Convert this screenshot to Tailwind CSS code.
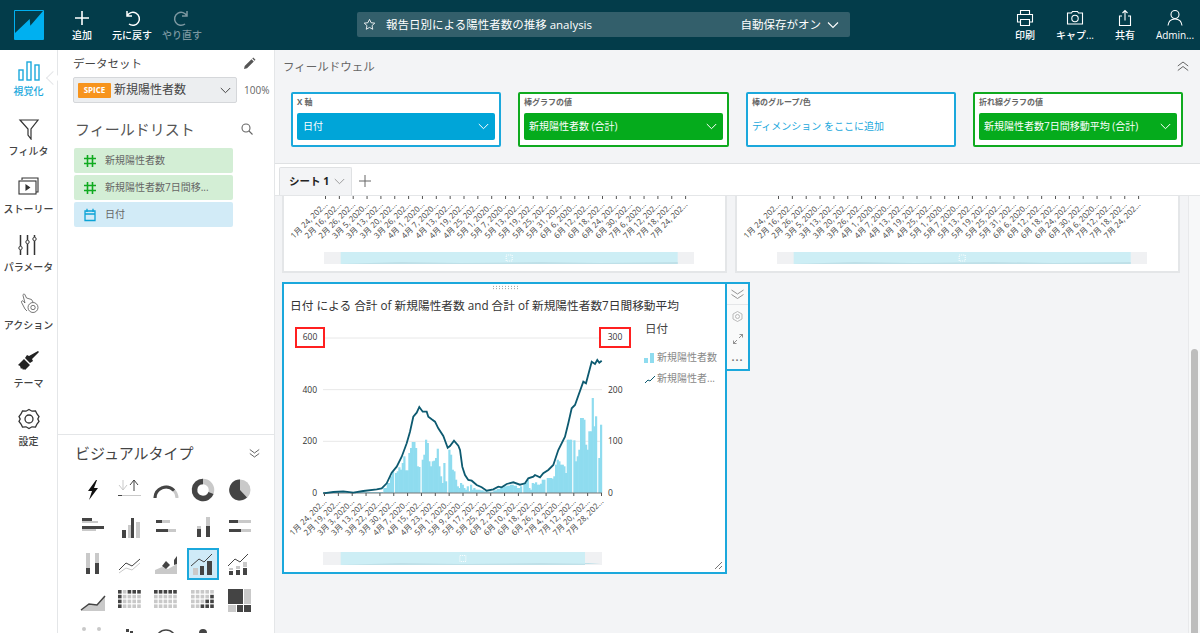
<!DOCTYPE html>
<html lang="ja">
<head>
<meta charset="UTF-8" />
<title>QuickSight</title>
<script src="https://cdn.jsdelivr.net/npm/@tailwindcss/browser@4"></script>
</head>
<body class="h-[633px] w-[1200px] overflow-hidden bg-white text-[#444] font-['Open_Sans','Noto_Sans_CJK_JP',sans-serif]">
<!-- top bar -->
<header class="flex h-[50px] bg-[#033c4a] text-white">
  <div class="flex w-[57px] shrink-0 items-center justify-center">
    <svg width="30" height="30" viewBox="0 0 30 30"><rect width="30" height="30" rx="1" fill="#00b0f0"/><path d="M1 1h28L16.300 15.700 15.700 9 1 23z" fill="#033c4a"/></svg>
  </div>
  <div class="flex w-[50px] flex-col items-center pt-[9px] text-[10px] leading-[14px]">
    <svg width="18" height="18" viewBox="0 0 18 18" fill="none" stroke="#fff" stroke-width="1.6"><path d="M9 2v14M2 9h14"/></svg>
    <span class="mt-[1px] font-medium">追加</span>
  </div>
  <div class="flex w-[50px] flex-col items-center pt-[9px] text-[10px] leading-[14px]">
    <svg width="18" height="18" viewBox="0 0 18 18" fill="none" stroke="#fff" stroke-width="1.5"><path d="M4 2v5h5M4 7a6.500 6.500 0 1 1 2 8"/></svg>
    <span class="mt-[1px] whitespace-nowrap font-medium">元に戻す</span>
  </div>
  <div class="flex w-[50px] flex-col items-center pt-[9px] text-[10px] leading-[14px] text-[#7d98a1]">
    <svg width="18" height="18" viewBox="0 0 18 18" fill="none" stroke="#7d98a1" stroke-width="1.5"><path d="M14 2v5H9M14 7a6.500 6.500 0 1 0-2 8"/></svg>
    <span class="mt-[1px] whitespace-nowrap font-medium">やり直す</span>
  </div>
  <div class="ml-[150px] mt-[12px] flex h-[25px] w-[493px] items-center rounded-[2px] bg-[#335f6b] pl-[6px] pr-[11px] text-[11.5px]">
    <svg width="13" height="13" viewBox="0 0 24 24" fill="none" stroke="#fff" stroke-width="1.6"><path d="M12 2.500l2.900 6.200 6.800.8-5 4.600 1.300 6.700-6-3.400-6 3.400 1.300-6.700-5-4.600 6.800-.8z"/></svg>
    <span class="ml-[10px]">報告日別による陽性者数の推移 analysis</span>
    <span class="ml-auto">自動保存がオン</span>
    <svg class="ml-[6px]" width="12" height="8" viewBox="0 0 12 8" fill="none" stroke="#fff" stroke-width="1.1"><path d="M1 1.500l5 5 5-5"/></svg>
  </div>
  <div class="ml-auto flex text-[10px] leading-[14px]">
    <div class="flex w-[50px] flex-col items-center pt-[9px]">
      <svg width="18" height="18" viewBox="0 0 18 18" fill="none" stroke="#fff" stroke-width="1.1"><path d="M4.500 5V1.500h9V5M4.500 13H1.500V5.500h15V13h-3M4.500 10.500h9v6h-9z"/></svg>
      <span class="mt-[1px] font-medium">印刷</span>
    </div>
    <div class="flex w-[50px] flex-col items-center pt-[9px]">
      <svg width="18" height="18" viewBox="0 0 18 18" fill="none" stroke="#fff" stroke-width="1.1"><path d="M1.500 4h4l1-1.500h5L12.500 4h4v11h-15z"/><circle cx="9" cy="9.500" r="3.200"/></svg>
      <span class="mt-[1px] whitespace-nowrap font-medium">キャプ...</span>
    </div>
    <div class="flex w-[50px] flex-col items-center pt-[9px]">
      <svg width="18" height="18" viewBox="0 0 18 18" fill="none" stroke="#fff" stroke-width="1.1"><path d="M6 7H3.500v9.500h11V7H12M9 11.500V1.500M6.500 4L9 1.500 11.500 4"/></svg>
      <span class="mt-[1px] font-medium">共有</span>
    </div>
    <div class="flex w-[50px] flex-col items-center pt-[9px]">
      <svg width="18" height="18" viewBox="0 0 18 18" fill="none" stroke="#fff" stroke-width="1.1"><circle cx="9" cy="5.500" r="4"/><path d="M2 16.500c.5-4.500 3-6.500 7-6.500s6.500 2 7 6.500"/></svg>
      <span class="mt-[1px] whitespace-nowrap font-medium">Admin...</span>
    </div>
  </div>
</header>

<div class="flex h-[583px]">
  <!-- left nav -->
  <nav class="relative flex w-[58px] shrink-0 flex-col items-center border-r border-[#e4e6e8] pt-[10px] text-[10px] leading-[14px]">
    <div class="flex h-[58px] flex-col items-center text-[#1ba8dc]">
      <svg width="22" height="21" viewBox="0 0 22 21" fill="none" stroke="#1ba8dc" stroke-width="1.4"><rect x="1" y="10" width="4" height="10"/><rect x="9" y="2" width="4" height="18"/><rect x="17" y="5" width="4" height="15"/></svg>
      <span class="mt-[3px] font-medium">視覚化</span>
    </div>
    <div class="flex h-[58px] flex-col items-center">
      <svg width="22" height="22" viewBox="0 0 22 22" fill="none" stroke="#333" stroke-width="1.2"><path d="M2 2h18l-7 9v10l-3-4v-6z"/></svg>
      <span class="mt-[4px] font-medium">フィルタ</span>
    </div>
    <div class="flex h-[58px] flex-col items-center">
      <svg width="22" height="22" viewBox="0 0 22 22" fill="none" stroke="#333" stroke-width="1.1"><path d="M4 4V2h16v14h-2"/><rect x="1" y="5" width="17" height="13"/><path d="M8 9v5l3.500-2.500z" fill="#333"/></svg>
      <span class="mt-[4px] whitespace-nowrap font-medium">ストーリー</span>
    </div>
    <div class="flex h-[58px] flex-col items-center">
      <svg width="22" height="22" viewBox="0 0 22 22" fill="none" stroke="#333" stroke-width="1.5"><path d="M3.500 1v11M3.500 16v5M10.500 1v5M10.500 10v11M17.500 1v2M17.500 7v14"/><circle cx="3.500" cy="14" r="1.700" stroke-width="1"/><circle cx="10.500" cy="8" r="1.700" stroke-width="1"/><circle cx="17.500" cy="5" r="1.700" stroke-width="1"/></svg>
      <span class="mt-[4px] whitespace-nowrap font-medium">パラメータ</span>
    </div>
    <div class="flex h-[58px] flex-col items-center">
      <svg width="22" height="22" viewBox="0 0 22 22" fill="none" stroke="#555" stroke-width="0.8"><path d="M7 11L5 3.500a1 1 0 0 1 2-.7L8.500 6l5 1.500 1.500 2.500M7 11L5.500 9.500a1 1 0 0 0-2 .8L7 17l2 2"/><circle cx="15" cy="15.500" r="5"/><circle cx="15" cy="15.500" r="2.200"/></svg>
      <span class="mt-[4px] whitespace-nowrap font-medium">アクション</span>
    </div>
    <div class="flex h-[58px] flex-col items-center">
      <svg width="22" height="22" viewBox="0 0 22 22" fill="#222"><path d="M20 1l1 1-7 7 1 2-3 2-5-5 2-3 2 1zM6 9l6 6-5 5-1-1-1 1-1-2-1 1-1-3-2-1 2-2z"/></svg>
      <span class="mt-[4px] font-medium">テーマ</span>
    </div>
    <div class="flex h-[58px] flex-col items-center">
      <svg width="22" height="22" viewBox="0 0 22 22" fill="none" stroke="#333" stroke-width="1.3"><path d="M11 1.500l3 1.700 3.500-.3 1.500 3.100 2 2.500-1.200 2.500 1.200 2.500-2 2.500-1.500 3.100-3.500-.3-3 1.700-3-1.700-3.500.3-1.500-3.100-2-2.500 1.200-2.500-1.200-2.500 2-2.500 1.500-3.100 3.500.3z"/><circle cx="11" cy="11" r="4"/></svg>
      <span class="mt-[4px] font-medium">設定</span>
    </div>
    <span class="absolute right-[-1px] top-[23px] h-[10px] w-[10px] rotate-45 border-b border-l border-[#e4e6e8] bg-white"></span>
  </nav>

  <!-- dataset panel -->
  <aside class="flex w-[217px] shrink-0 flex-col border-r border-[#e4e6e8]">
    <div class="h-[385px] border-b border-[#e4e6e8] pl-[15px]">
      <div class="flex h-[27px] items-center justify-between pr-[18px] text-[11.5px]">
        <span>データセット</span>
        <svg width="13" height="13" viewBox="0 0 13 13" fill="#555"><path d="M1 12l.7-3L8.500 2.200l2.300 2.300L4 11.300zM9.300 1.400l.9-.9 2.300 2.300-.9.9z"/></svg>
      </div>
      <div class="flex items-center">
        <div class="flex h-[26px] w-[164px] shrink-0 items-center rounded-[2px] border border-[#d5d7da] bg-[#eceef0] px-[4px]">
          <span class="flex h-[15px] w-[33px] items-center justify-center rounded-[1px] bg-[#f7941d] text-[8px] font-bold text-white">SPICE</span>
          <span class="ml-[3px] text-[12px]">新規陽性者数</span>
          <svg class="ml-auto mr-[1px]" width="11" height="7" viewBox="0 0 11 7" fill="none" stroke="#444" stroke-width="1"><path d="M.8 1l4.700 4.700L10.200 1"/></svg>
        </div>
        <span class="ml-[7px] whitespace-nowrap text-[10px] text-[#666]">100%</span>
      </div>
      <div class="mt-[13px] flex h-[26px] items-center justify-between pl-[2px] pr-[21px] text-[15px] text-[#555]">
        <span>フィールドリスト</span>
        <svg width="12" height="12" viewBox="0 0 12 12" fill="none" stroke="#666" stroke-width="1.1"><circle cx="5" cy="5" r="4"/><path d="M8 8l3.500 3.500"/></svg>
      </div>
      <ul class="ml-[1px] mt-[6px] flex w-[159px] flex-col gap-[2px] text-[10px] text-[#666]">
        <li class="flex h-[25px] items-center rounded-[2px] bg-[#d3eed5] pl-[9px]">
          <svg width="14" height="14" viewBox="0 0 14 14" fill="none" stroke="#0faa1f" stroke-width="1.6"><path d="M4.500 1v12M9.500 1v12M1 4.500h12M1 9.500h12"/></svg>
          <span class="ml-[8px]">新規陽性者数</span>
        </li>
        <li class="flex h-[25px] items-center rounded-[2px] bg-[#d3eed5] pl-[9px]">
          <svg width="14" height="14" viewBox="0 0 14 14" fill="none" stroke="#0faa1f" stroke-width="1.6"><path d="M4.500 1v12M9.500 1v12M1 4.500h12M1 9.500h12"/></svg>
          <span class="ml-[8px] whitespace-nowrap">新規陽性者数7日間移...</span>
        </li>
        <li class="flex h-[25px] items-center rounded-[2px] bg-[#d2ebf7] pl-[9px]">
          <svg width="14" height="14" viewBox="0 0 14 14" fill="none" stroke="#0aa3d6" stroke-width="1.3"><path d="M2 3h10v9.500H2zM2 6h10M4 .8V4M10 .8V4"/></svg>
          <span class="ml-[8px]">日付</span>
        </li>
      </ul>
    </div>
    <div class="min-h-0 flex-1 overflow-hidden pl-[17px] pr-[14px]">
      <div class="flex h-[36px] items-center justify-between text-[15px] text-[#444]">
        <span>ビジュアルタイプ</span>
        <svg width="11" height="11" viewBox="0 0 11 11" fill="none" stroke="#555" stroke-width="0.9"><path d="M.8 1.500l4.700 3.500 4.700-3.500M.8 5.500l4.700 3.500 4.700-3.500"/></svg>
      </div>
      <div class="grid w-[183px] grid-cols-5" id="vis"></div>
    </div>
  </aside>

  <!-- main -->
  <main class="flex min-w-0 flex-1 flex-col bg-[#f3f4f6]">
    <section class="h-[114px] shrink-0 border-b border-[#dfe1e3] pl-[8px] pr-[11px]">
      <div class="flex h-[33px] items-center justify-between text-[11.5px] text-[#666]">
        <span>フィールドウェル</span>
        <svg width="12" height="11" viewBox="0 0 12 11" fill="none" stroke="#555" stroke-width="0.9"><path d="M.8 5l5.200-4 5.200 4M.8 9.500l5.200-4 5.200 4"/></svg>
      </div>
      <div class="ml-[8px] mt-[9px] flex gap-[17px]">
        <div class="h-[55px] w-[210px] rounded-[2px] border-2 border-[#1ba8dc] bg-white px-[4px]">
          <div class="h-[19px] pt-[1px] text-[8px] font-bold leading-[14px] text-[#666]">X 軸</div>
          <div class="flex h-[27px] items-center justify-between rounded-[2px] bg-[#00a5d8] pl-[6px] pr-[6px] text-[10px] text-white"><span>日付</span><svg width="11" height="7" viewBox="0 0 11 7" fill="none" stroke="#fff" stroke-width="1"><path d="M.8 1l4.700 4.700L10.200 1"/></svg></div>
        </div>
        <div class="h-[55px] w-[211px] rounded-[2px] border-2 border-[#0faa1f] bg-white px-[4px]">
          <div class="h-[19px] pt-[1px] text-[8px] font-bold leading-[14px] text-[#666]">棒グラフの値</div>
          <div class="flex h-[27px] items-center justify-between rounded-[2px] bg-[#05ab1c] pl-[5px] pr-[6px] text-[10px] text-white"><span>新規陽性者数 (合計)</span><svg width="11" height="7" viewBox="0 0 11 7" fill="none" stroke="#fff" stroke-width="1"><path d="M.8 1l4.700 4.700L10.200 1"/></svg></div>
        </div>
        <div class="h-[55px] w-[210px] rounded-[2px] border-2 border-[#1ba8dc] bg-white px-[4px]">
          <div class="h-[19px] pt-[1px] text-[8px] font-bold leading-[14px] text-[#666]">棒のグループ/色</div>
          <div class="flex h-[27px] items-center text-[10px] text-[#1ba8dc]">ディメンション をここに追加</div>
        </div>
        <div class="h-[55px] w-[210px] rounded-[2px] border-2 border-[#0faa1f] bg-white px-[4px]">
          <div class="h-[19px] pt-[1px] text-[8px] font-bold leading-[14px] text-[#666]">折れ線グラフの値</div>
          <div class="flex h-[27px] items-center justify-between rounded-[2px] bg-[#05ab1c] pl-[5px] pr-[6px] text-[10px] text-white"><span class="whitespace-nowrap">新規陽性者数7日間移動平均 (合計)</span><svg width="11" height="7" viewBox="0 0 11 7" fill="none" stroke="#fff" stroke-width="1"><path d="M.8 1l4.700 4.700L10.200 1"/></svg></div>
        </div>
      </div>
    </section>
    <div class="flex h-[32px] shrink-0 items-end border-b border-[#e4e6e8] bg-white pl-[4px]">
      <div class="flex h-[28px] w-[73px] items-center rounded-t-[2px] border border-b-0 border-[#dfe1e3] bg-[#f3f4f6] pl-[9px] text-[10.5px] font-bold text-[#222]">
        <span>シート 1</span>
        <svg class="ml-[5px]" width="11" height="7" viewBox="0 0 11 7" fill="none" stroke="#888" stroke-width="0.8"><path d="M.8 1l4.700 4.700L10.200 1"/></svg>
      </div>
      <svg class="mb-[8px] ml-[7px]" width="12" height="12" viewBox="0 0 12 12" stroke="#666" stroke-width="1"><path d="M6 0v12M0 6h12"/></svg>
    </div>
    <div class="relative min-h-0 flex-1 overflow-hidden pl-[7px]">
      <div class="flex gap-[8px]">
        <div class="h-[77px] w-[445px] border-2 border-t-0 border-[#e4e6e8] bg-white" data-mini></div>
        <div class="h-[77px] w-[445px] border-2 border-t-0 border-[#e4e6e8] bg-white" data-mini></div>
      </div>
      <div class="mt-[9px] flex items-start">
        <!-- selected visual -->
        <div class="relative h-[292px] w-[445px] border-2 border-[#1ba8dc] bg-white">
          <div class="flex h-[8px] justify-center pt-[1px]"><span class="h-[5px] w-[26px] bg-[radial-gradient(#888_1px,transparent_1px)] bg-[length:3px_2.5px]"></span></div>
          <h3 class="mt-[4px] pl-[6px] text-[11.7px] leading-[18px] text-[#333]">日付 による 合計 of 新規陽性者数 and 合計 of 新規陽性者数7日間移動平均</h3>
          <svg class="absolute left-0 top-0" width="441" height="288" id="chart"></svg>
          <div class="absolute left-[11px] top-[43px] flex h-[21px] w-[30px] items-center justify-center border-2 border-[#ff2020] bg-white text-[8.5px] text-[#333]">600</div>
          <div class="absolute left-[315px] top-[43px] flex h-[21px] w-[32px] items-center justify-center border-2 border-[#ff2020] bg-white text-[8.5px] text-[#333]">300</div>
          <div class="absolute left-[361px] top-[36px] text-[11.5px] text-[#444]">日付</div>
          <div class="absolute left-[360px] top-[66px] flex items-center text-[10px] text-[#888]">
            <svg width="12" height="12" viewBox="0 0 12 12" fill="#8fdcef"><rect x="0" y="6" width="4" height="5"/><rect x="6" y="1" width="4" height="10"/></svg><span class="ml-[1px] whitespace-nowrap">新規陽性者数</span>
          </div>
          <div class="absolute left-[360px] top-[87px] flex items-center text-[10px] text-[#888]">
            <svg width="12" height="12" viewBox="0 0 12 12" fill="none" stroke="#0d5a70" stroke-width="1"><path d="M1 10l3-3 2 1 5-5"/></svg><span class="ml-[1px] whitespace-nowrap">新規陽性者...</span>
          </div>
          <svg class="absolute bottom-[2px] right-[2px]" width="9" height="9" viewBox="0 0 9 9" stroke="#666" stroke-width="0.9"><path d="M1 8l7-7M5 8l3-3"/></svg>
        </div>
        <!-- visual toolbar -->
        <div class="-ml-[2px] flex h-[89px] w-[25px] flex-col items-center border-2 border-[#1ba8dc] bg-[#f9fafa]">
          <div class="flex h-[21px] w-full items-center justify-center border-b border-[#e4e6e8]"><svg width="13" height="11" viewBox="0 0 13 11" fill="none" stroke="#888" stroke-width="0.9"><path d="M.5 1l6 4 6-4M.5 5.500l6 4 6-4"/></svg></div>
          <div class="flex h-[23px] items-center"><svg width="11" height="11" viewBox="0 0 11 11" fill="none" stroke="#aaa" stroke-width="0.8"><path d="M5.500.5l4.500 2.500v5l-4.500 2.500-4.500-2.500v-5z"/><circle cx="5.500" cy="5.500" r="2"/></svg></div>
          <div class="flex h-[22px] items-center"><svg width="10" height="10" viewBox="0 0 10 10" fill="none" stroke="#777" stroke-width="0.8"><path d="M6 4l3.500-3.500M6.500.5h3v3M4 6L.5 9.500M.5 6.500v3h3"/></svg></div>
          <div class="flex h-[19px] items-center text-[8px] leading-none tracking-[1px] text-[#777]">•••</div>
        </div>
      </div>
      <!-- page scrollbar -->
      <div class="absolute bottom-0 right-0 top-0 w-[12px] border-l border-[#e8e9eb] bg-[#f7f8f9]">
        <div class="absolute bottom-0 left-[2px] top-[153px] w-[7px] rounded-t-full bg-[#bdbdbd]"></div>
      </div>
    </div>
  </main>
</div>

<script>
  const font = "'Open Sans','Noto Sans CJK JP',sans-serif";
  function label(x, y, t) {
    return `<text transform="translate(${x} ${y}) rotate(-45)" text-anchor="end" font-size="8" font-family="${font}" fill="#444">${t}</text>`;
  }
  function slider(x, y, w, h, a, b) {
    return `<rect x="${x}" y="${y}" width="${w}" height="${h}" fill="#f0f1f3"/><rect x="${a}" y="${y}" width="${b - a}" height="${h}" fill="#cdeef5"/>` +
      `<path d="M${a} ${y + h}l60-2 60 1 80-1 60 1 ${b - a - 260} -1V${y + h}z" fill="#bfe0e8"/>` +
      `<rect x="${(a + b) / 2 - 3}" y="${y + h / 2 - 3}" width="6" height="6" fill="none" stroke="#fff" stroke-dasharray="1 1"/>`;
  }

  // mini charts above: only the cut-off date axis and the range slider show
  const miniLabels = ["1月 24, 202...","2月 16, 202...","2月 26, 202...","3月 5, 2020...","3月 13, 202...","3月 20, 202...","3月 26, 202...","4月 1, 2020...","4月 7, 2020...","4月 13, 202...","4月 19, 202...","4月 25, 202...","5月 1, 2020...","5月 7, 2020...","5月 13, 202...","5月 19, 202...","5月 25, 202...","5月 31, 202...","6月 6, 2020...","6月 12, 202...","6月 18, 202...","6月 24, 202...","6月 30, 202...","7月 6, 2020...","7月 12, 202...","7月 18, 202...","7月 24, 202..."];
  document.querySelectorAll("[data-mini]").forEach((box) => {
    let s = "";
    miniLabels.forEach((t, i) => {
      const x = 41 + i * 13.85;
      s += `<rect x="${x}" y="0" width="1" height="3" fill="#555"/>` + label(x + 3, 9, t);
    });
    s += slider(40, 56, 370, 12, 56.7, 393.7);
    box.innerHTML = `<svg width="441" height="75">${s}</svg>`;
  });

  // chart in the selected visual, traced from the 3x crops: [x, top y]
  const x0 = 39, plotTop = 54, zero = 209;
  const left = [[310,625],[320,610],[330,590],[336,575],[341,640],[345,580],[350,575],[355,563],[360,570],[365,550],[370,530],[375,572],[380,572],[385,520],[390,505],[395,487],[400,487],[405,505],[410,560],[415,562],[420,640],[425,540],[430,525],[435,480],[440,490],[445,545],[450,560],[455,545],[460,543],[465,535],[470,507],[475,560],[480,590],[485,610],[490,550],[495,605],[500,640],[505,510],[510,525],[515,570],[520,575],[525,600],[530,620],[535,625],[540,610],[545,615],[550,625],[555,630],[560,620],[565,635],[570,615],[575,630],[580,625],[585,630],[590,630],[600,632],[610,635],[620,636],[630,636],[640,632],[650,628],[660,625],[670,620],[680,618],[690,615],[700,618],[710,625],[720,620]];
  const right = [[30,620],[35,640],[40,610],[50,600],[55,625],[60,630],[65,610],[70,612],[75,608],[80,615],[85,615],[90,612],[95,600],[105,640],[110,595],[115,595],[120,595],[125,597],[130,590],[135,555],[140,540],[145,545],[150,555],[155,555],[160,560],[165,580],[170,480],[175,480],[180,480],[185,640],[190,482],[195,545],[200,530],[205,510],[210,415],[215,415],[220,420],[225,495],[230,510],[235,455],[240,455],[245,355],[250,440],[255,410],[260,640],[265,535],[270,435],[275,640]];
  const bars = left.map(([x, y]) => [x / 3 - 4, (640 - y) / 3]).concat(right.map(([x, y]) => [226 + x / 3, (640 - y) / 3]));
  const line = "39.3,209.3 49.3,208 59.3,207.3 69.3,208.7 79.3,207 92.7,205.3 97.7,204.3 102.7,199.3 107.7,188.7 112.7,182.7 117.7,172.7 122.7,159.3 126,147.7 129.3,132.7 132.7,128.7 135.3,123 138.7,127.7 142.7,127.7 144.3,132.7 147.7,135.3 151,137.7 154.3,144.3 159.3,152 163.7,163.7 166,162 170,156.7 174.3,161.7 176,166 178.3,182.7 181,191 184.3,196 187.7,196.7 192.7,201 197.7,203.3 202.7,206.7 209.3,205.3 214.3,202.7 217.7,203.3 222.7,200 229.3,198.3 236,200.7 241,199.3 244.3,194.3 249.3,192.7 251,191 256,193.3 259.3,189.3 264.3,186 269.3,181 274.3,166 281,152.7 284.3,139.3 287.7,124.3 291,121 299.3,97.7 302,99.3 307.7,77.7 311,80 313.3,76 315.3,78.7 317.7,76.7";

  let s = "";
  const ticks = [["600",""],["400","200"],["200","100"],["0","0"]];
  ticks.forEach(([l, r], i) => {
    const y = plotTop + (zero - plotTop) * i / 3;
    if (i < 3) s += `<line x1="${x0}" x2="${x0 + 279}" y1="${y}" y2="${y}" stroke="#e8e8e8"/>`;
    if (i > 0) s += `<text x="${x0 - 6}" y="${y + 3}" text-anchor="end" font-size="8.5" font-family="${font}" fill="#333">${l}</text>`;
    if (r) s += `<text x="${x0 + 285}" y="${y + 3}" font-size="8.5" font-family="${font}" fill="#333">${r}</text>`;
  });
  s += `<rect x="${x0}" y="${zero - 1}" width="60" height="1" fill="#8fdcef"/>`;
  bars.forEach(([x, h], i) => {
    const next = bars[i + 1] ? bars[i + 1][0] : x + 1;
    if (h > 0) s += `<rect x="${x.toFixed(1)}" y="${(zero - h).toFixed(1)}" width="${(next - x + 0.5).toFixed(1)}" height="${h.toFixed(1)}" fill="#8fdcef"/>`;
  });
  s += `<line x1="${x0}" x2="${x0 + 279}" y1="${zero}" y2="${zero}" stroke="#777"/>`;
  s += `<polyline points="${line}" fill="none" stroke="#0d5a70" stroke-width="1.8"/>`;
  const labels = ["1月 24, 202...","2月 19, 202...","3月 3, 2020...","3月 13, 202...","3月 22, 202...","3月 30, 202...","4月 7, 2020...","4月 15, 202...","4月 23, 202...","5月 1, 2020...","5月 9, 2020...","5月 17, 202...","5月 25, 202...","6月 2, 2020...","6月 10, 202...","6月 18, 202...","6月 26, 202...","7月 4, 2020...","7月 12, 202...","7月 20, 202...","7月 28, 202..."];
  labels.forEach((t, i) => {
    const x = x0 + 1 + i * 13.85;
    s += `<rect x="${x}" y="${zero}" width="1" height="3" fill="#555"/>` + label(x + 3, zero + 9, t);
  });
  s += slider(x0, 268, 279, 13, 56.7, 301);
  document.getElementById("chart").innerHTML = s;

  // visual type picker
  const d = "#444", g = "#c9c9c9";
  const r = (x, y, w, h, f) => `<rect x="${x}" y="${y}" width="${w}" height="${h}" fill="${f}"/>`;
  const pl = (p, c = d, sw = 1) => `<polyline points="${p}" fill="none" stroke="${c}" stroke-width="${sw}"/>`;
  const grid = (on) => {
    let c = "";
    for (let row = 0; row < 4; row++) for (let col = 0; col < 5; col++)
      c += r(2 + col * 4.8, 2 + row * 4.8, 3.6, 3.6, on(row, col) ? d : g);
    return c;
  };
  const icons = [
    `<path d="M17 3L9 14h4l-3 9 9-12h-4l3-8z" fill="#111"/>`,
    pl("3,8 7,13 11,8", g) + pl("7,3 7,13", g) + pl("14,8 18,3 22,8", d) + pl("18,3 18,14", d) + r(2,18,23,1,g) + r(2,18,4,1,d),
    `<path d="M3 21a11 11 0 0 1 22 0" fill="none" stroke="${g}" stroke-width="3"/><path d="M3 21a11 11 0 0 1 19-7.500" fill="none" stroke="${d}" stroke-width="3"/>`,
    `<circle cx="14" cy="13" r="8.500" fill="none" stroke="${g}" stroke-width="5.500"/><path d="M14 4.500a8.500 8.500 0 1 0 8 11.500" fill="none" stroke="${d}" stroke-width="5.500"/>`,
    `<circle cx="14" cy="13" r="10.500" fill="${g}"/><path d="M14 13V2.500a10.500 10.500 0 1 0 7 18z" fill="${d}"/>`,
    r(3,4,10,3,d) + r(3,7,16,2,g) + r(3,12,22,3,d) + r(3,15,14,2,g),
    r(6,16,4,8,d) + r(12,11,3,13,g) + r(15,4,3,20,d) + r(20,8,4,16,g),
    r(4,6,6,3,d) + r(10,6,8,3,g) + r(4,15,12,3,d) + r(16,15,8,3,g),
    r(8,15,4,8,d) + r(8,12,4,3,g) + r(17,3,4,9,g) + r(17,12,4,11,d),
    r(3,6,9,3,d) + r(12,6,13,3,g) + r(3,15,12,3,d) + r(15,15,10,3,g),
    r(7,2,4,15,g) + r(7,17,4,6,d) + r(16,2,4,10,g) + r(16,12,4,11,d),
    pl("3,19 10,12 16,15 24,8", d) + pl("3,22 10,17 16,19 24,12", g),
    `<path d="M3 23v-4l7-3 6 2 9-5v10z" fill="${g}"/><path d="M10 15l4-5 4 4-4 4z" fill="${d}"/><path d="M22 9l3-4v8l-3 1z" fill="${d}"/>`,
    r(4,17,5,7,g) + r(11,15,4,9,d) + r(18,10,5,14,d) + pl("2,15 10,8 15,11 23,3", d),
    r(3,20,4,4,d) + r(3,17,4,2,g) + r(10,19,4,5,d) + r(10,15,4,3,g) + r(17,17,4,7,d) + r(17,11,4,5,g) + pl("2,15 9,8 14,11 22,3", d),
    `<path d="M2 22l8-6 8 1 8-9v15H2z" fill="${g}"/>` + pl("2,22 10,16 18,17 26,8", d, 1.5),
    grid((a, b) => b == 0 || (a == 0 && b > 1)),
    grid((a) => a == 0),
    grid((a, b) => a + b > 4),
    r(2,1,15,15,d) + r(18,1,7,15,g) + r(2,17,8,7,g) + r(11,17,6,7,d) + r(18,17,7,7,d),
    `<circle cx="5" cy="4" r="2" fill="${g}"/><circle cx="20" cy="4" r="2" fill="${g}"/>`,
    r(10,4,3,3,d) + r(14,6,3,2,d),
    `<circle cx="14" cy="15" r="10" fill="none" stroke="${d}" stroke-width="1.5"/>`,
    `<circle cx="14" cy="8" r="4" fill="${d}"/>`,
  ];
  document.getElementById("vis").innerHTML = icons.map((ic, i) => {
    const box = i == 13
      ? "flex h-[32px] w-[32px] items-center justify-center border-2 border-[#1ba8dc] bg-[#cfeaf7]"
      : "flex h-[32px] w-[32px] items-center justify-center";
    return `<div class="flex h-[37px] items-center justify-center"><div class="${box}"><svg class="shrink-0" width="28" height="26" viewBox="0 0 28 26">${ic}</svg></div></div>`;
  }).join("");
</script>
</body>
</html>
